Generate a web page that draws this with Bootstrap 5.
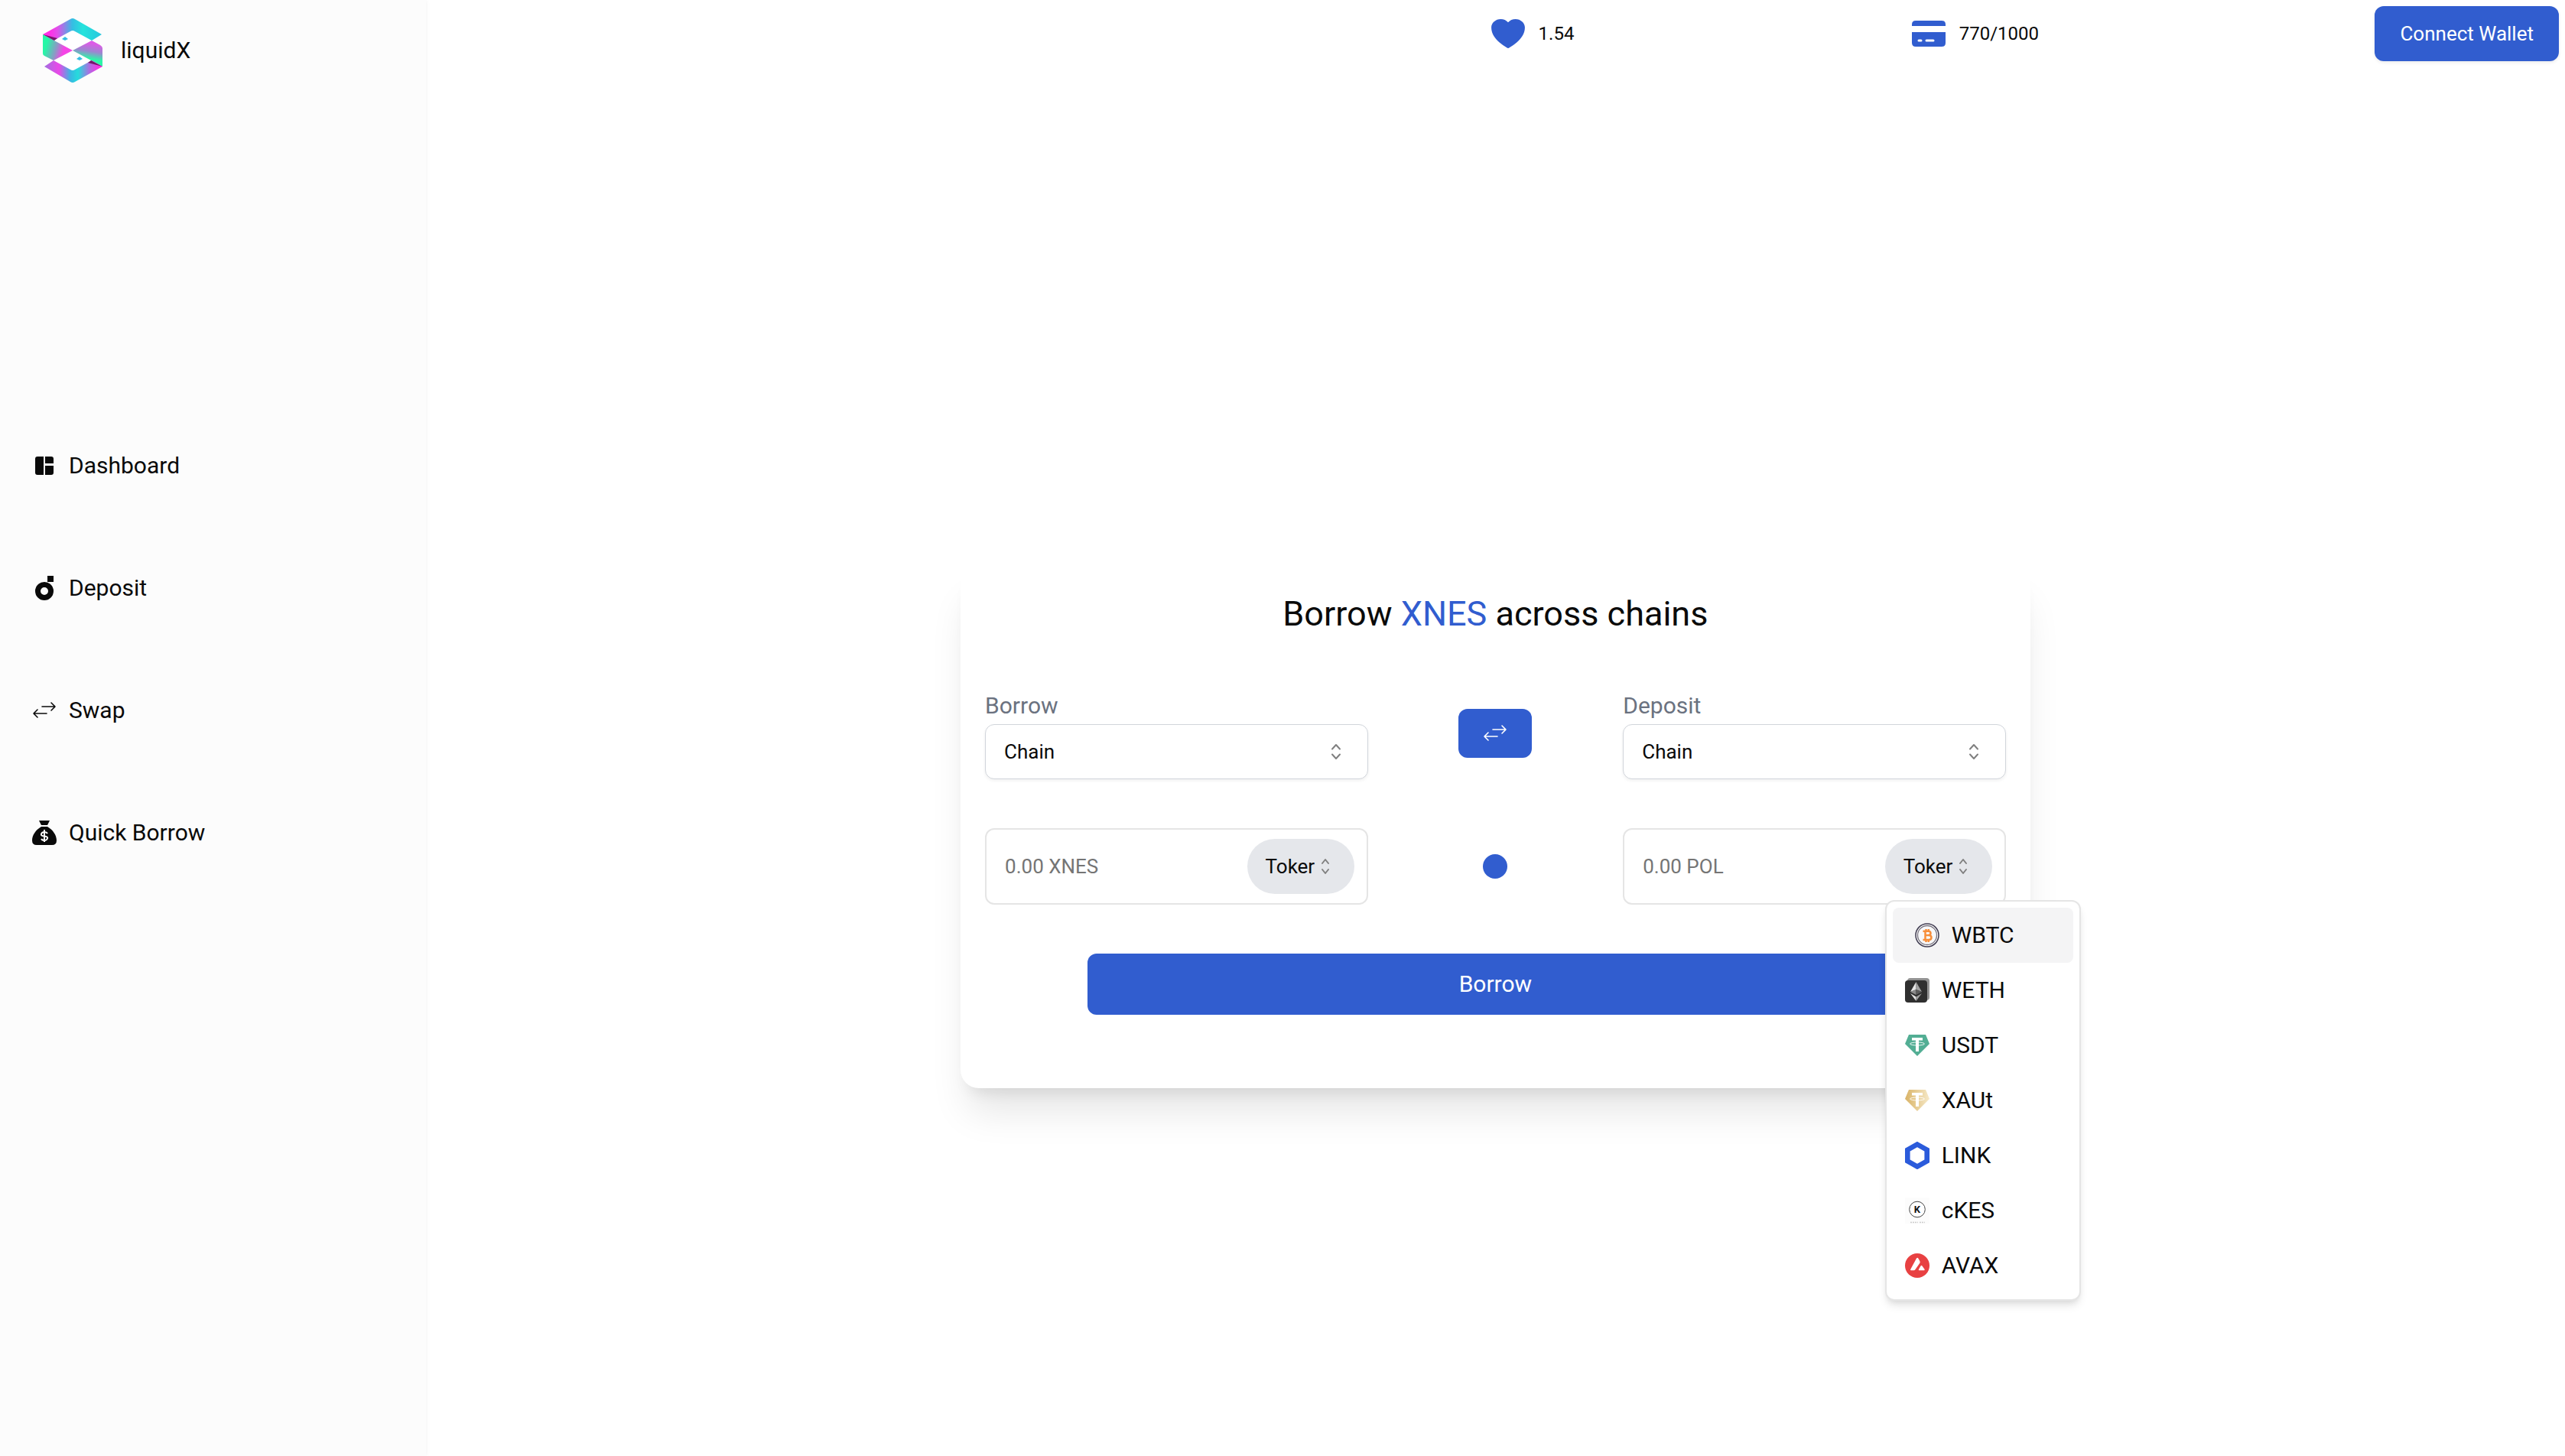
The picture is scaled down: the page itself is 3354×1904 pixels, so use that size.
<!DOCTYPE html>
<html lang="en">
<head>
<meta charset="utf-8">
<meta name="viewport" content="width=device-width, initial-scale=1">
<title>liquidX</title>
<link href="https://cdn.jsdelivr.net/npm/bootstrap@5.3.0/dist/css/bootstrap.min.css" rel="stylesheet">
<style>
  :root { --lx-blue: #315dcf; --lx-ink: #0a0a0a; --lx-grey: #6b7280; --lx-line: #e5e5e5; }
  body { font-family: Roboto, "Open Sans", sans-serif; font-size: 30px; line-height: 48px; color: var(--lx-ink); background: #fff; }
  svg { display: block; flex: none; }
  .lx-sidebar { width: 16.6%; background: #fcfcfc; box-shadow: 0 0 6px rgba(0,0,0,.06); }
  .lx-brand { padding: 24px 56px; gap: 24px; color: inherit; }
  .lx-menu { padding: 0 42px 338px; gap: 112px; }
  .lx-menu a { gap: 16px; color: inherit; }
  .lx-topbar { gap: 13.1vw; padding: 8px; font-size: 24px; }
  .lx-stat { gap: 16px; }
  .lx-btn { --bs-btn-color: #fff; --bs-btn-bg: var(--lx-blue); --bs-btn-border-color: var(--lx-blue); --bs-btn-hover-color: #fff; --bs-btn-hover-bg: #284fb4; --bs-btn-hover-border-color: #284fb4; --bs-btn-border-radius: 12px; --bs-btn-border-width: 0; --bs-btn-padding-y: 0; --bs-btn-padding-x: 33px; --bs-btn-line-height: 48px; }
  .lx-connect { --bs-btn-font-size: 26px; height: 72px; box-shadow: 0 2px 4px rgba(0,0,0,.08); }
  .lx-stage { padding-top: 170px; }
  .lx-panel { width: 50%; padding: 32px 32px 96px; gap: 64px; border-radius: 24px; background: #fff; box-shadow: 0 40px 50px -10px rgba(0,0,0,.1), 0 16px 20px -12px rgba(0,0,0,.1); }
  .lx-title { font-size: 45px; line-height: 64px; font-weight: 400; }
  .lx-accent { color: var(--lx-blue); }
  .lx-field { width: 37.5%; }
  .lx-field label { color: var(--lx-grey); }
  .lx-select { height: 72px; padding: 0 64px 0 24px; border: 1px solid #d1d5db; border-radius: 12px; font-size: 26px; line-height: 48px; color: var(--lx-ink); background-position: right 34px center; background-size: 14px 24px; box-shadow: 0 2px 4px rgba(0,0,0,.06);
    --bs-form-select-bg-img: url("data:image/svg+xml,%3Csvg xmlns='http://www.w3.org/2000/svg' viewBox='0 0 14 24' fill='none' stroke='%23808080' stroke-width='2' stroke-linecap='round' stroke-linejoin='round'%3E%3Cpath d='M2 8.500 7 3l5 5.500M2 15.500 7 21l5-5.500'/%3E%3C/svg%3E"); }
  .lx-swap { width: 96px; height: 64px; --bs-btn-padding-x: 0; }
  .lx-amount { height: 100px; padding: 0 16px 0 0; border: 2px solid var(--lx-line); border-radius: 12px; }
  .lx-amount input { padding: 0 24px; font-size: 26px; line-height: 48px; min-width: 0; }
  .lx-amount input::placeholder { color: #757575; }
  .lx-pill { width: 140px; height: 72px; padding: 0 32px 0 24px; border: 0; border-radius: 36px; background: #e5e7eb; font-size: 26px; line-height: 48px; color: var(--lx-ink); }
  .lx-dot-slot { width: 96px; }
  .lx-dot { width: 32px; height: 32px; background: var(--lx-blue); }
  .lx-borrow { width: 80%; height: 80px; --bs-btn-font-size: 30px; }
  .lx-tokens { top: 80px; left: 0; width: 256px; padding: 8px; border: 2px solid var(--lx-line); border-radius: 12px; background: #fff; box-shadow: 0 8px 12px -2px rgba(0,0,0,.1), 0 4px 8px -4px rgba(0,0,0,.1); z-index: 5; }
  .lx-token { height: 72px; padding: 0 16px; gap: 16px; border: 0; border-radius: 8px; background: none; color: var(--lx-ink); }
  .lx-token.is-current { background: #f4f4f5; padding-left: 29px; }
</style>
</head>
<body>
<div class="d-flex min-vh-100">
  <aside class="lx-sidebar d-flex flex-column flex-shrink-0">
    <a href="#" class="lx-brand d-flex align-items-center text-decoration-none">
      <svg width="78" height="84" viewBox="0 0 78 84" aria-hidden="true">
        <defs>
          <linearGradient id="bandTop"><stop offset=".12" stop-color="#ff2fe6"/><stop offset=".25" stop-color="#e050ea"/><stop offset=".5" stop-color="#35bde3"/><stop offset=".68" stop-color="#25e3dc"/><stop offset="1" stop-color="#29c6de"/></linearGradient>
          <linearGradient id="bandLeft" x1="0" y1=".2" x2="1" y2=".45"><stop offset=".15" stop-color="#25f7a6"/><stop offset=".5" stop-color="#8a9bc5"/><stop offset=".75" stop-color="#f545e6"/></linearGradient>
          <linearGradient id="bandRight" x1=".6" y1="0" x2=".4" y2="1"><stop offset=".1" stop-color="#dc5be6"/><stop offset=".4" stop-color="#9c87d0"/><stop offset=".68" stop-color="#2df5a8"/></linearGradient>
          <linearGradient id="bandLow"><stop offset="0" stop-color="#a26fe0"/><stop offset=".25" stop-color="#ea48e8"/><stop offset=".45" stop-color="#38b8e2"/><stop offset=".58" stop-color="#25dcdc"/><stop offset=".78" stop-color="#b06ae2"/><stop offset=".95" stop-color="#ff2fe6"/></linearGradient>
        </defs>
        <path fill="#fff" d="M39 16 64 29 39 42 14 29zM39 42l25 13-25 13-25-13z"/>
        <path fill="url(#bandTop)" d="M0 21 36 1q3-2 6 0l35 20-13 8-22-12q-3-2-6 0L14 29z"/>
        <path fill="url(#bandLeft)" d="m0 21 39 21-25 13-12-6q-2-1-2-3z"/>
        <path fill="#75176b" d="m0 21 19 5-4 3z"/>
        <path fill="url(#bandRight)" d="m39 42 25-13 11 6q3 2 3 4v24z"/>
        <path fill="url(#bandLow)" d="m2 63 12-8 22 12q3 2 6 0l22-12 14 8-36 20q-3 2-6 0z"/>
        <path fill="#75176b" d="m78 63-19-5 4-3z"/>
        <path fill="#35bde3" d="m29 24 4 3-4 2-4-2zM48 50l4 3-4 2-4-2z"/>
      </svg>
      <span>liquidX</span>
    </a>
    <nav class="lx-menu d-flex flex-column justify-content-center flex-grow-1">
      <a href="#" class="d-flex align-items-center text-decoration-none">
        <svg width="32" height="32" viewBox="0 0 32 32" fill="currentColor"><path d="M7 4h8v24H7q-3 0-3-3V7q0-3 3-3zM17 4h8q3 0 3 3v6H17zM17 16h11v9q0 3-3 3h-8z"/></svg>
        <span>Dashboard</span></a>
      <a href="#" class="d-flex align-items-center text-decoration-none">
        <svg width="32" height="32" viewBox="0 0 32 32"><circle cx="16" cy="20" r="8.500" fill="none" stroke="currentColor" stroke-width="7"/><path fill="currentColor" d="M20 0h8v8h-8z"/></svg>
        <span>Deposit</span></a>
      <a href="#" class="d-flex align-items-center text-decoration-none">
        <svg width="32" height="32" viewBox="0 0 32 32" fill="none" stroke="currentColor" stroke-width="1.600" stroke-linecap="round" stroke-linejoin="round"><path d="M13 11h16M25 6l5 5-5 5M19 20H3M7 15l-5 5 5 5"/></svg>
        <span>Swap</span></a>
      <a href="#" class="d-flex align-items-center text-decoration-none">
        <svg width="32" height="32" viewBox="0 0 32 32"><path fill="currentColor" d="M9 0h14l-3 6h-8zM12 8h8c7 4 12 11 12 18q0 6-6 6H6q-6 0-6-6C0 19 5 12 12 8z"/><path d="M20 17q-1-2-4-2t-4 2.500 4 3 4 3-4 2.500-4-2M16 12v16" fill="none" stroke="#fff" stroke-width="2"/></svg>
        <span>Quick Borrow</span></a>
    </nav>
  </aside>

  <div class="d-flex flex-column flex-grow-1">
    <header class="lx-topbar d-flex align-items-center justify-content-end">
      <div class="lx-stat d-flex align-items-center">
        <svg width="48" height="48" viewBox="0 0 24 24" fill="#315dcf"><path d="m11.645 20.910-.007-.003-.022-.012a15.247 15.247 0 0 1-.383-.218 25.180 25.180 0 0 1-4.244-3.170C4.688 15.360 2.250 12.174 2.250 8.250 2.250 5.322 4.714 3 7.688 3A5.500 5.500 0 0 1 12 5.052 5.500 5.500 0 0 1 16.313 3c2.973 0 5.437 2.322 5.437 5.250 0 3.925-2.438 7.111-4.739 9.256a25.175 25.175 0 0 1-4.244 3.170 15.247 15.247 0 0 1-.383.219l-.022.012-.007.004-.003.001a.752.752 0 0 1-.704 0l-.003-.001Z" transform="translate(-1.500 -.665) scale(1.125 1.055)"/></svg>
        <span>1.54</span>
      </div>
      <div class="lx-stat d-flex align-items-center">
        <svg width="48" height="48" viewBox="0 0 48 48"><path fill="#315dcf" d="M7 7h34q5 0 5 5v2H2v-2q0-5 5-5zM2 22h44v14q0 5-5 5H7q-5 0-5-5z"/><path d="M11 33h3M21 33h9" stroke="#fff" stroke-width="3" stroke-linecap="round"/></svg>
        <span>770/1000</span>
      </div>
      <button type="button" class="btn lx-btn lx-connect">Connect Wallet</button>
    </header>

    <main class="lx-stage d-flex flex-grow-1 align-items-center justify-content-center">
      <form class="lx-panel d-flex flex-column">
        <h1 class="lx-title text-center mb-0">Borrow <span class="lx-accent">XNES</span> across chains</h1>

        <div class="d-flex justify-content-between align-items-center">
          <div class="lx-field">
            <label class="d-block" for="borrowChain">Borrow</label>
            <select class="form-select lx-select" id="borrowChain"><option>Chain</option></select>
          </div>
          <button type="button" class="btn lx-btn lx-swap d-flex align-items-center justify-content-center" aria-label="Swap sides">
            <svg width="32" height="32" viewBox="0 0 32 32" fill="none" stroke="currentColor" stroke-width="1.600" stroke-linecap="round" stroke-linejoin="round"><path d="M13 11h16M25 6l5 5-5 5M19 20H3M7 15l-5 5 5 5"/></svg>
          </button>
          <div class="lx-field">
            <label class="d-block" for="depositChain">Deposit</label>
            <select class="form-select lx-select" id="depositChain"><option>Chain</option></select>
          </div>
        </div>

        <div class="d-flex justify-content-between align-items-center">
          <div class="lx-field lx-amount d-flex align-items-center">
            <input class="form-control border-0 bg-transparent shadow-none" type="text" placeholder="0.00 XNES" aria-label="Borrow amount">
            <button type="button" class="lx-pill d-flex align-items-center justify-content-between flex-shrink-0">Toker
              <svg width="12" height="24" viewBox="0 0 12 24" fill="none" stroke="#808080" stroke-width="2" stroke-linecap="round" stroke-linejoin="round"><path d="m2 8 4-5 4 5M2 16l4 5 4-5"/></svg></button>
          </div>
          <div class="lx-dot-slot d-flex justify-content-center"><span class="lx-dot rounded-circle"></span></div>
          <div class="lx-field lx-amount d-flex align-items-center">
            <input class="form-control border-0 bg-transparent shadow-none" type="text" placeholder="0.00 POL" aria-label="Deposit amount">
            <div class="position-relative flex-shrink-0">
              <button type="button" class="lx-pill d-flex align-items-center justify-content-between" aria-expanded="true">Toker
                <svg width="12" height="24" viewBox="0 0 12 24" fill="none" stroke="#808080" stroke-width="2" stroke-linecap="round" stroke-linejoin="round"><path d="m2 8 4-5 4 5M2 16l4 5 4-5"/></svg></button>
              <div class="lx-tokens position-absolute" role="listbox" aria-label="Token">
                <button type="button" role="option" aria-selected="true" class="lx-token is-current d-flex align-items-center w-100">
                  <svg width="32" height="32" viewBox="0 0 32 32"><circle cx="16" cy="16" r="15" fill="#fff" stroke="#3f3b50" stroke-width="1.500"/><circle cx="16" cy="16" r="12.500" fill="#f8f8f9" stroke="#77737f" stroke-width="1.300"/><path d="M10.500 10.700h7q3 0 3 2.600t-3 2.600H13h5q3.500 0 3.500 3t-3.500 3h-7.500M13.500 10.500v11.400M14.500 8v3M17.800 8v3M14.500 21.500v3.500M17.800 21.500v3.500" fill="none" stroke="#f78f3b" stroke-width="2.500"/></svg>WBTC</button>
                <button type="button" role="option" class="lx-token d-flex align-items-center w-100">
                  <svg width="32" height="32" viewBox="0 0 32 32"><rect x="3" width="29" height="29" rx="4" fill="#929292"/><rect y="3" width="29" height="29" rx="4" fill="#2f2f2f"/><path fill="#e4e4e4" d="M14.500 5v10L7 18z"/><path fill="#a0a0a0" d="M14.500 5 22 18l-7.500-3z"/><path fill="#8b8b8b" d="m7 18 7.500-3v7z"/><path fill="#5b5b5b" d="m22 18-7.500-3v7z"/><path fill="#e4e4e4" d="m7 20 7.500 4.500V30z"/><path fill="#a0a0a0" d="m22 20-7.500 4.500V30z"/></svg>WETH</button>
                <button type="button" role="option" class="lx-token d-flex align-items-center w-100">
                  <svg width="32" height="32" viewBox="0 0 32 32"><path fill="#53ae94" d="M5 2h22l5 12-16 16L0 14z"/><ellipse cx="16" cy="14" rx="9.500" ry="2" fill="none" stroke="#fff" stroke-width=".9"/><path fill="#fff" d="M9 6h14v3.500h-5V24h-4V9.500H9z"/></svg>USDT</button>
                <button type="button" role="option" class="lx-token d-flex align-items-center w-100">
                  <svg width="32" height="32" viewBox="0 0 32 32"><defs><linearGradient id="goldFill"><stop stop-color="#d9b366"/><stop offset="1" stop-color="#f6e9c8"/></linearGradient></defs><path fill="url(#goldFill)" d="M5 2h22l5 12-16 16L0 14z"/><ellipse cx="16" cy="14" rx="9.500" ry="2" fill="none" stroke="#fff" stroke-width=".9"/><path fill="#fff" d="M9 6h14v3.500h-5V24h-4V9.500H9z"/></svg>XAUt</button>
                <button type="button" role="option" class="lx-token d-flex align-items-center w-100">
                  <svg width="32" height="36" viewBox="0 0 32 36"><path d="m16 3.500 12.700 7.200v14.600L16 32.500 3.300 25.300V10.700z" fill="none" stroke="#2b5bdb" stroke-width="6.600"/></svg>LINK</button>
                <button type="button" role="option" class="lx-token d-flex align-items-center w-100">
                  <svg width="32" height="34" viewBox="0 0 32 34"><path fill="#fcfcfc" d="M0 0h32v34H0z"/><circle cx="16" cy="15.500" r="10.300" fill="#fff" stroke="#444"/><text x="16" y="20" text-anchor="middle" font-family="Roboto, sans-serif" font-weight="700" font-size="13" fill="#111">K</text><path d="M7 32.500h10M19 32.500h7" stroke="#ccc" stroke-width="1.500" stroke-dasharray="2 1"/></svg>cKES</button>
                <button type="button" role="option" class="lx-token d-flex align-items-center w-100">
                  <svg width="32" height="32" viewBox="0 0 32 32"><circle cx="16" cy="16" r="16" fill="#e84142"/><path fill="#fff" d="M15 6.500q1.200-1.600 2.300 0l2 3.500q.8 1.400 0 2.800L13.500 21q-.8 1.200-2 1.200H8q-1.500 0-.7-1.500zM20.500 16.500q1-1.400 2 0l3 4.200q.8 1.500-.8 1.500h-6q-1.500 0-.7-1.500z"/></svg>AVAX</button>
              </div>
            </div>
          </div>
        </div>

        <button type="button" class="btn lx-btn lx-borrow align-self-center">Borrow</button>
      </form>
    </main>
  </div>
</div>
<script src="https://cdn.jsdelivr.net/npm/bootstrap@5.3.0/dist/js/bootstrap.bundle.min.js"></script>
</body>
</html>
